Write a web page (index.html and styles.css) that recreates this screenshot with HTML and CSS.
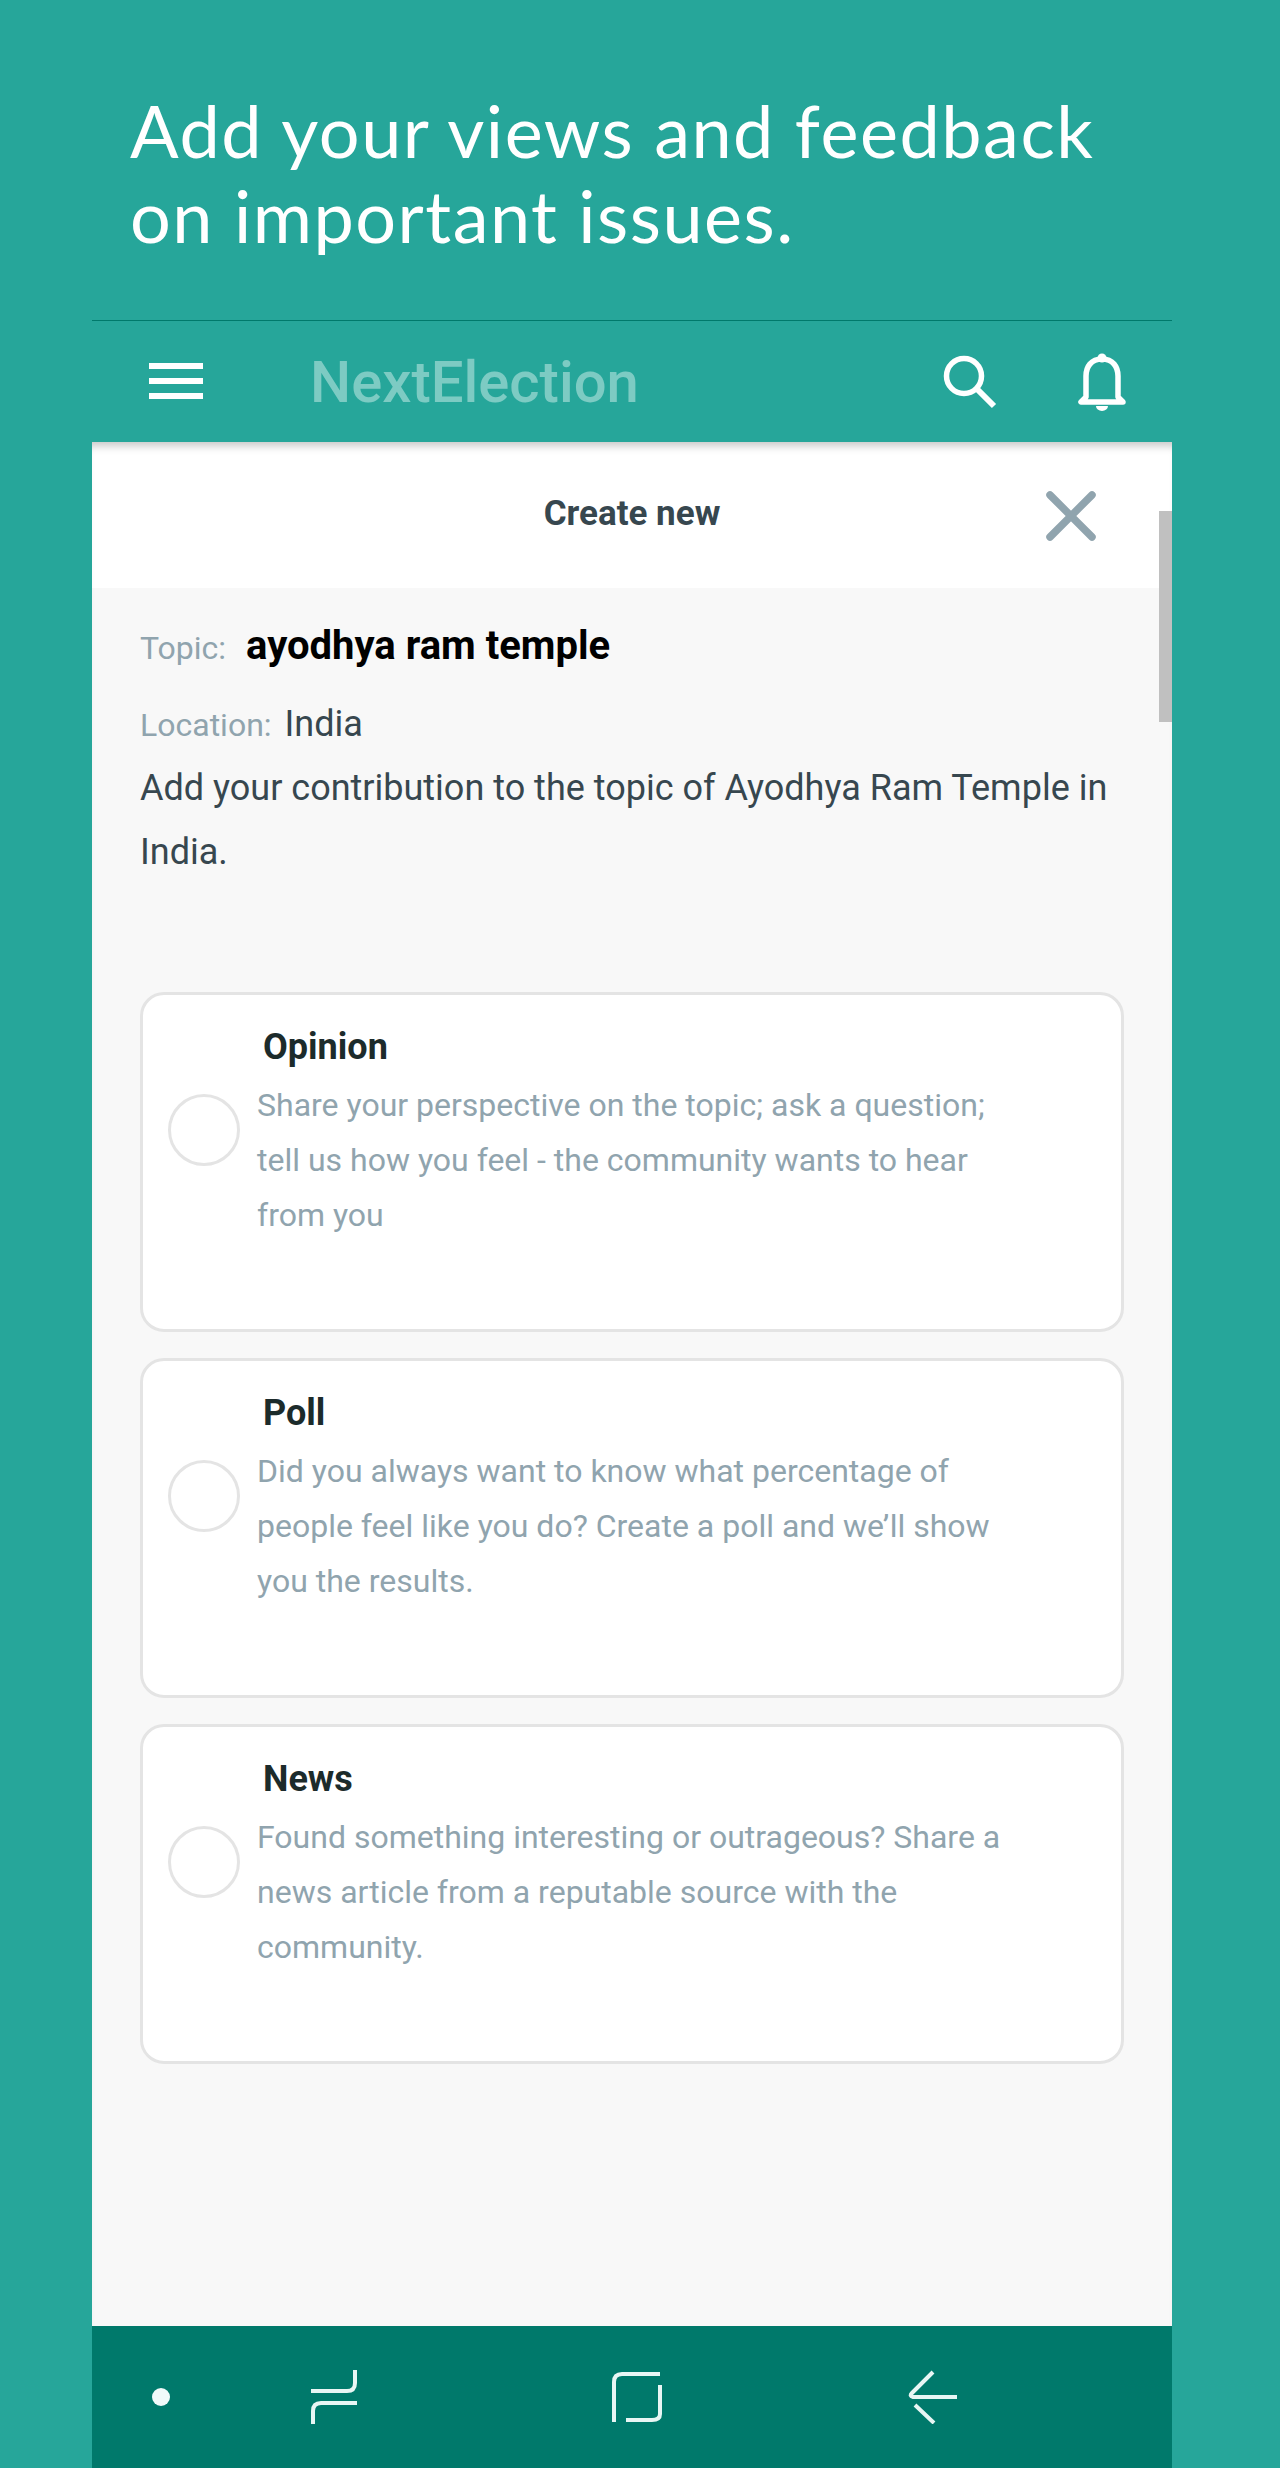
FILE: index.html
```html
<!DOCTYPE html>
<html lang="en">
<head>
<meta charset="utf-8">
<title>NextElection</title>
<link rel="stylesheet" href="styles.css">
</head>
<body>
<div class="page">
  <h1 class="hero">Add your views and feedback<br>on important issues.</h1>
  <div class="phone">
    <header class="appbar">
      <svg class="menu" width="56" height="38" viewBox="0 0 56 38"><path d="M0 3h54M0 18h54M0 33h54" stroke="#fff" stroke-width="6" fill="none"/></svg>
      <div class="brand">NextElection</div>
      <svg class="search" width="56" height="56" viewBox="0 0 56 56"><circle cx="21" cy="22" r="17.5" fill="none" stroke="#fff" stroke-width="5.5"/><path d="M33 34l18 18" stroke="#fff" stroke-width="6" fill="none"/></svg>
      <svg class="bell" width="50" height="60" viewBox="0 0 50 60"><path d="M25 7c-11 0-16 8-16 17v21l-5 5h42l-5-5V24c0-9-5-17-16-17z" fill="none" stroke="#fff" stroke-width="5.5" stroke-linejoin="round"/><circle cx="25" cy="6" r="4.5" fill="#fff"/><path d="M19 54h12a6 5 0 0 1-12 0z" fill="#fff"/></svg>
    </header>
    <main class="sheet">
      <div class="sheet-head">
        <div class="sheet-title">Create new</div>
        <svg class="close" width="50" height="50" viewBox="0 0 50 50"><path d="M4 4l42 42M46 4L4 46" stroke="#90a4ae" stroke-width="7.5" stroke-linecap="round" fill="none"/></svg>
      </div>
      <div class="sheet-body">
        <div class="topic"><span class="label">Topic:</span><span class="topic-name">ayodhya ram temple</span></div>
        <div class="location"><span class="label">Location:</span><span class="loc-name">India</span></div>
        <p class="intro">Add your contribution to the topic of Ayodhya Ram Temple in India.</p>
        <div class="cards">
          <section class="card">
            <span class="radio"></span>
            <div class="card-text">
              <h2 class="card-title">Opinion</h2>
              <p class="card-desc">Share your perspective on the topic; ask a question; tell us how you feel - the community wants to hear from you</p>
            </div>
          </section>
          <section class="card">
            <span class="radio"></span>
            <div class="card-text">
              <h2 class="card-title">Poll</h2>
              <p class="card-desc">Did you always want to know what percentage of people feel like you do? Create a poll and we’ll show you the results.</p>
            </div>
          </section>
          <section class="card">
            <span class="radio"></span>
            <div class="card-text">
              <h2 class="card-title">News</h2>
              <p class="card-desc">Found something interesting or outrageous? Share a news article from a reputable source with the community.</p>
            </div>
          </section>
        </div>
      </div>
      <div class="scrollbar"></div>
    </main>
    <nav class="navbar">
      <span class="dot"></span>
      <svg class="nav-recent" width="48" height="54" viewBox="0 0 48 54"><path d="M1 21h36q8 0 8-8V0M47 33H11q-8 0-8 8v13" fill="none" stroke="#e8f6f4" stroke-width="4"/></svg>
      <svg class="nav-home" width="50" height="52" viewBox="0 0 50 52"><path d="M48 3H10q-8 0-8 8v40M48 14v29q0 6-8 6H14" fill="none" stroke="#e8f6f4" stroke-width="4"/></svg>
      <svg class="nav-back" width="50" height="54" viewBox="0 0 50 54"><path d="M25 2L4 23q-3 3 1 4h44M7 35l19 18" fill="none" stroke="#e8f6f4" stroke-width="4"/></svg>
    </nav>
  </div>
</div>
</body>
</html>
```
FILE: styles.css
```css
* { box-sizing: border-box; }
html, body { margin: 0; padding: 0; }
body { font-family: Roboto, "Liberation Sans", sans-serif; }
.page {
  width: 1280px;
  height: 2468px;
  background: #26a69a;
  overflow: hidden;
  display: flex;
  flex-direction: column;
}
.hero {
  margin: 0;
  padding: 88px 92px 0 130px;
  height: 320px;
  font-family: Lato, "Liberation Sans", sans-serif;
  font-weight: 400;
  font-size: 72px;
  line-height: 85px;
  letter-spacing: 1.5px;
  color: #fff;
}
.phone {
  width: 1080px;
  margin-left: 92px;
  flex: 1;
  display: flex;
  flex-direction: column;
  min-height: 0;
}
.appbar {
  height: 122px;
  border-top: 1px solid #00796b;
  display: flex;
  align-items: center;
  padding-left: 57px;
  flex: none;
}
.menu { flex: none; margin-right: 105px; }
.brand {
  font-size: 58px;
  font-weight: 500;
  color: #7dcbc3;
  flex: 1;
}
.search { flex: none; margin-right: 78px; margin-left: 0; }
.bell { flex: none; margin-right: 45px; }
.sheet {
  position: relative;
  flex: 1;
  min-height: 0;
  display: flex;
  flex-direction: column;
  background: #f8f8f8;
  box-shadow: inset 0 10px 8px -6px rgba(0, 0, 0, 0.22);
}
.sheet-head {
  height: 146px;
  background: #fff;
  box-shadow: inset 0 10px 8px -6px rgba(0, 0, 0, 0.22);
  display: flex;
  align-items: center;
  justify-content: center;
  position: relative;
  flex: none;
}
.sheet-title {
  font-size: 35px;
  font-weight: 700;
  color: #37474f;
  margin-top: -4px;
}
.close { position: absolute; right: 76px; top: 49px; }
.sheet-body { padding: 0 48px; }
.topic { display: flex; align-items: baseline; margin-top: 34px; }
.label { font-size: 32px; color: #90a4ae; }
.topic-name { font-size: 40px; font-weight: 700; color: #000; margin-left: 20px; }
.location { display: flex; align-items: baseline; margin-top: 34px; }
.loc-name { font-size: 36px; color: #37474f; margin-left: 13px; }
.intro {
  margin: 11px 0 0;
  font-size: 36px;
  line-height: 64px;
  color: #37474f;
}
.cards {
  margin-top: 108px;
  display: flex;
  flex-direction: column;
  gap: 26px;
}
.card {
  height: 340px;
  background: #fff;
  border: 3px solid #e4e4e4;
  border-radius: 24px;
  display: flex;
  padding-left: 25px;
}
.radio {
  flex: none;
  width: 72px;
  height: 72px;
  border: 3px solid #e4e4e4;
  border-radius: 50%;
  margin-top: 99px;
  margin-right: 17px;
}
.card-text { width: 760px; }
.card-title {
  margin: 31px 0 0 6px;
  font-size: 36px;
  line-height: 42px;
  font-weight: 700;
  color: #1c2b2b;
}
.card-desc {
  margin: 10px 0 0;
  font-size: 32px;
  line-height: 55px;
  color: #90a4ae;
}
.scrollbar {
  position: absolute;
  right: 0;
  top: 69px;
  width: 13px;
  height: 211px;
  background: #c0c0c0;
}
.navbar {
  height: 142px;
  flex: none;
  background: #00796b;
  display: flex;
  align-items: center;
  position: relative;
}
.dot {
  width: 18px;
  height: 18px;
  border-radius: 50%;
  background: #f0fafa;
  margin-left: 60px;
  flex: none;
}
.nav-recent { margin-left: 140px; flex: none; }
.nav-home { margin-left: 254px; flex: none; }
.nav-back { margin-left: 246px; flex: none; }
```
